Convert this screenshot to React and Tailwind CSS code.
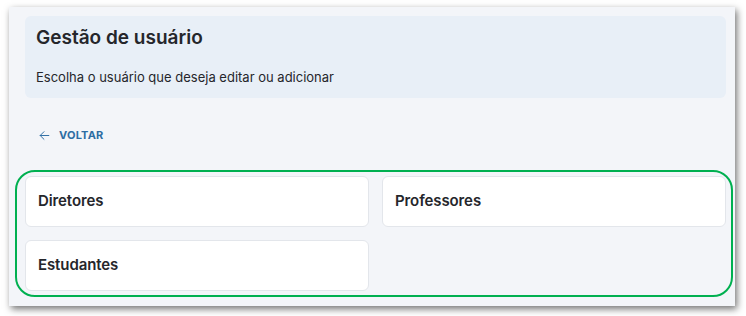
import React from "react";

function Card({ label }) {
  return (
    <div className="h-[51px] flex items-center pl-[12px] bg-white border border-[#e3e6eb] rounded-[6px]">
      <span className="text-[15px] font-semibold text-[#25262b] tracking-[-0.1px]">{label}</span>
    </div>
  );
}

export default function App() {
  return (
    <div
      className="w-[746px] h-[316px] bg-white pt-[7px] pl-[9px]"
      style={{ fontFamily: "Inter, 'Noto Sans', sans-serif" }}
    >
      <div className="w-[726px] h-[299px] bg-[#f3f5f9] shadow-[2px_3px_7px_rgba(0,0,0,0.55)] pt-[9px] pl-[6px] pr-[2px] flex flex-col">
        <div className="ml-[10px] mr-[7px] h-[82px] bg-[#e8eff7] rounded-[6px] pl-[11px] pt-[10px] flex flex-col">
          <h1 className="text-[19px] leading-[24px] font-semibold text-[#25262b]">Gestão de usuário</h1>
          <p className="mt-[18px] text-[13px] leading-[18px] text-[#25262b]">
            Escolha o usuário que deseja editar ou adicionar
          </p>
        </div>
        <div className="ml-[23px] mt-[27px] h-[20px] flex items-center gap-[8px] text-[#2d6da3]">
          <svg width="13" height="13" viewBox="0 0 24 24" fill="none" stroke="currentColor" strokeWidth="1.8" strokeLinecap="round" strokeLinejoin="round">
            <path d="M20 12H4" />
            <path d="M11 19l-7-7 7-7" />
          </svg>
          <span className="text-[11px] font-bold tracking-[0.2px]">VOLTAR</span>
        </div>
        <div className="mt-[25px] border-2 border-[#00b050] rounded-[20px] pl-[8px] pr-[5px] py-[4px] grid grid-cols-2 gap-[13px]">
          <Card label="Diretores" />
          <Card label="Professores" />
          <Card label="Estudantes" />
        </div>
      </div>
    </div>
  );
}
